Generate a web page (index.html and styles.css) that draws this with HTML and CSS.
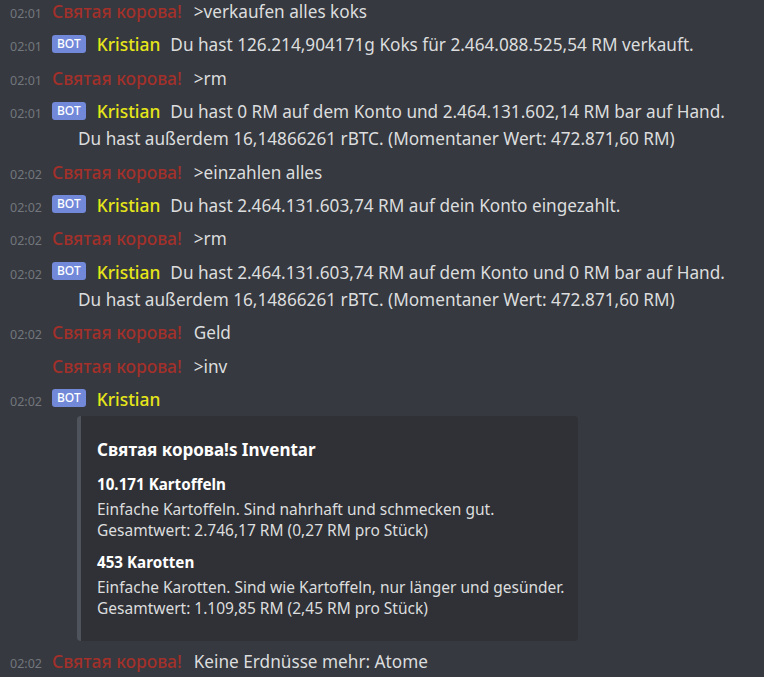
FILE: index.html
```html
<!DOCTYPE html>
<html>
<head>
<meta charset="utf-8">
<link rel="stylesheet" href="styles.css">
</head>
<body>
<div class="chat">
  <div class="msg first">
    <div class="line"><span class="ts">02:01</span><span class="name cow">Святая корова!</span><span class="text">&gt;verkaufen alles koks</span></div>
  </div>
  <div class="msg">
    <div class="line"><span class="ts">02:01</span><span class="bot">BOT</span><span class="name kr">Kristian</span><span class="text">Du hast 126.214,904171g Koks für 2.464.088.525,54 RM verkauft.</span></div>
  </div>
  <div class="msg">
    <div class="line"><span class="ts">02:01</span><span class="name cow">Святая корова!</span><span class="text">&gt;rm</span></div>
  </div>
  <div class="msg">
    <div class="line"><span class="ts">02:01</span><span class="bot">BOT</span><span class="name kr">Kristian</span><span class="text">Du hast 0 RM auf dem Konto und 2.464.131.602,14 RM bar auf Hand.</span></div>
    <div class="cont">Du hast außerdem 16,14866261 rBTC. (Momentaner Wert: 472.871,60 RM)</div>
  </div>
  <div class="msg">
    <div class="line"><span class="ts">02:02</span><span class="name cow">Святая корова!</span><span class="text">&gt;einzahlen alles</span></div>
  </div>
  <div class="msg">
    <div class="line"><span class="ts">02:02</span><span class="bot">BOT</span><span class="name kr">Kristian</span><span class="text">Du hast 2.464.131.603,74 RM auf dein Konto eingezahlt.</span></div>
  </div>
  <div class="msg">
    <div class="line"><span class="ts">02:02</span><span class="name cow">Святая корова!</span><span class="text">&gt;rm</span></div>
  </div>
  <div class="msg">
    <div class="line"><span class="ts">02:02</span><span class="bot">BOT</span><span class="name kr">Kristian</span><span class="text">Du hast 2.464.131.603,74 RM auf dem Konto und 0 RM bar auf Hand.</span></div>
    <div class="cont">Du hast außerdem 16,14866261 rBTC. (Momentaner Wert: 472.871,60 RM)</div>
  </div>
  <div class="msg">
    <div class="line"><span class="ts">02:02</span><span class="name cow">Святая корова!</span><span class="text">Geld</span></div>
  </div>
  <div class="msg">
    <div class="line"><span class="ts hidden">02:02</span><span class="name cow">Святая корова!</span><span class="text">&gt;inv</span></div>
  </div>
  <div class="msg">
    <div class="line"><span class="ts">02:02</span><span class="bot">BOT</span><span class="name kr">Kristian</span></div>
    <div class="embed">
      <div class="e-title">Святая корова!s Inventar</div>
      <div class="field">
        <div class="f-name">10.171 Kartoffeln</div>
        <div class="f-val">Einfache Kartoffeln. Sind nahrhaft und schmecken gut.</div>
        <div class="f-val">Gesamtwert: 2.746,17 RM (0,27 RM pro Stück)</div>
      </div>
      <div class="field">
        <div class="f-name">453 Karotten</div>
        <div class="f-val">Einfache Karotten. Sind wie Kartoffeln, nur länger und gesünder.</div>
        <div class="f-val">Gesamtwert: 1.109,85 RM (2,45 RM pro Stück)</div>
      </div>
    </div>
  </div>
  <div class="msg">
    <div class="line"><span class="ts">02:02</span><span class="name cow">Святая корова!</span><span class="text">Keine Erdnüsse mehr: Atome</span></div>
  </div>
</div>
</body>
</html>
```

FILE: styles.css
```css
html, body {
  margin: 0;
  padding: 0;
  background: #36393f;
  height: 100%;
  overflow: hidden;
}
body {
  font-family: "Noto Sans", "Open Sans", sans-serif;
  color: #dcddde;
  font-size: 17.2px;
}
.chat {
  display: flex;
  flex-direction: column;
  gap: 6.4px;
  margin-top: -2px;
}
.line {
  display: flex;
  align-items: baseline;
  height: 27px;
  line-height: 27px;
  white-space: nowrap;
}
.ts {
  width: 42px;
  text-align: right;
  font-size: 12.5px;
  line-height: 27px;
  color: #72767d;
  margin-right: 10px;
  flex: none;
}
.ts.hidden {
  visibility: hidden;
}
.bot {
  background: #7289da;
  color: #fff;
  font-size: 12px;
  font-weight: 500;
  line-height: 18px;
  height: 18px;
  padding: 0 5px;
  border-radius: 3px;
  margin-right: 11px;
  align-self: center;
  position: relative;
  top: -1px;
}
.name {
  font-size: 17.4px;
  font-weight: 500;
  margin-right: 12px;
}
.cow {
  color: #a3302a;
}
.kr {
  color: #e6e61a;
  margin-right: 10px;
}
.cont {
  padding-left: 78px;
  height: 27px;
  line-height: 27px;
  white-space: nowrap;
}
.embed {
  margin: 3px 0 1px 77px;
  width: 501px;
  box-sizing: border-box;
  background: #2f3136;
  border-left: 4px solid #4f545c;
  border-radius: 4px;
  padding: 23px 0 22px 16px;
}
.e-title {
  font-size: 17px;
  font-weight: 700;
  line-height: 22px;
  color: #ffffff;
}
.field {
  margin-top: 12px;
}
.field + .field {
  margin-top: 10px;
}
.f-name {
  font-size: 15.2px;
  font-weight: 700;
  line-height: 22px;
  color: #ffffff;
  margin-bottom: 3px;
}
.f-val {
  font-size: 15.5px;
  line-height: 22px;
  color: #dcddde;
}
.f-val + .f-val {
  line-height: 21px;
}
```
